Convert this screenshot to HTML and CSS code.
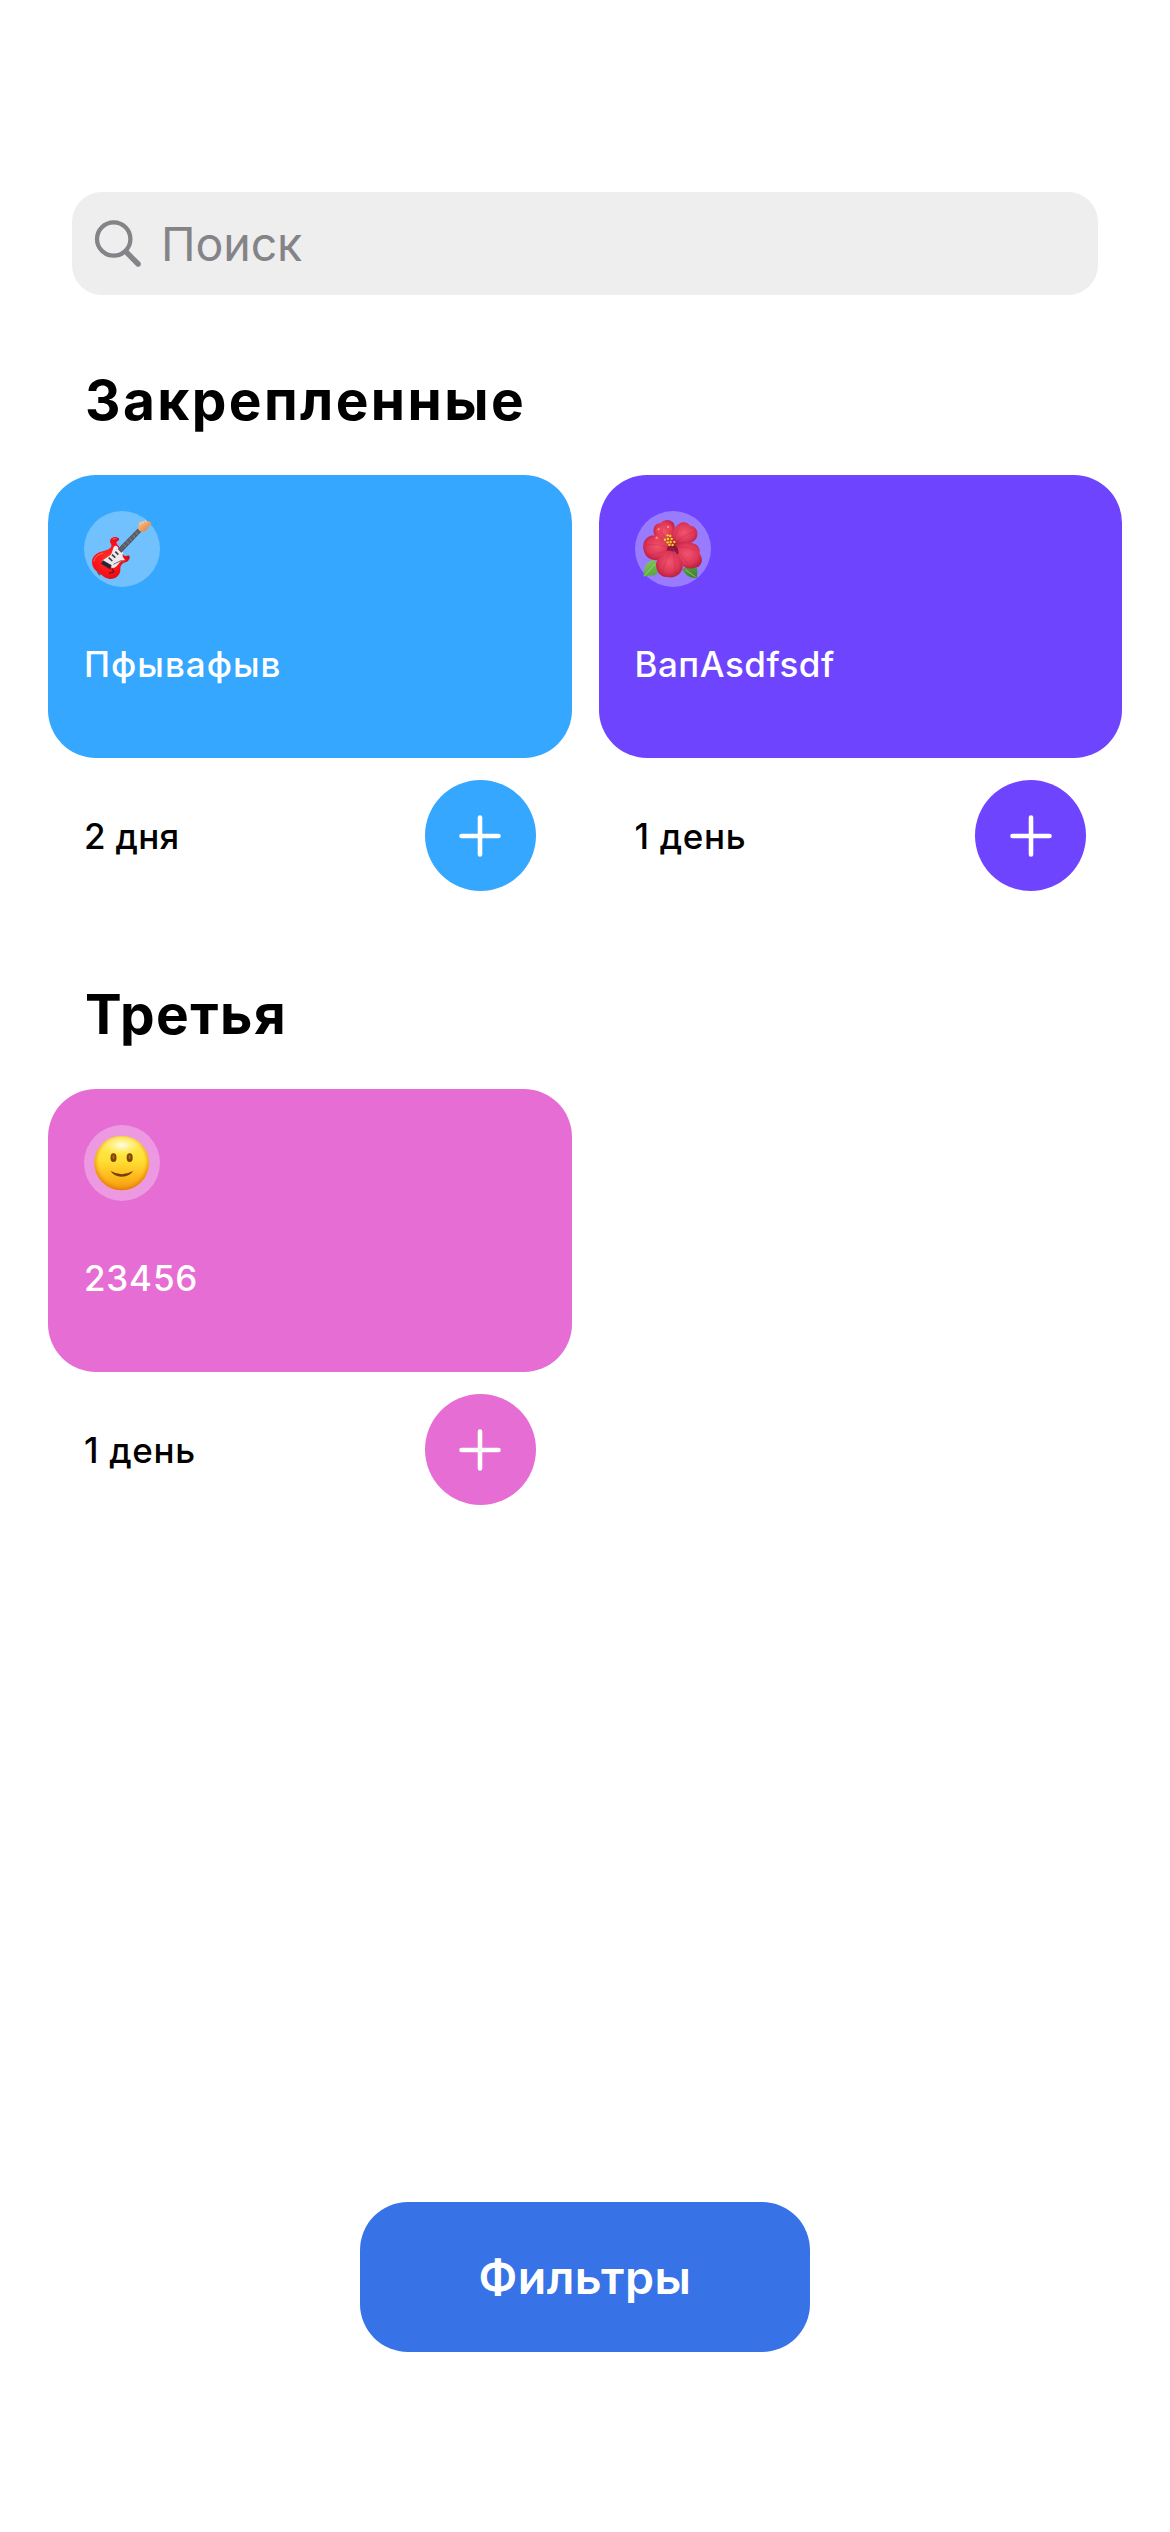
FILE: index.html
```html
<!DOCTYPE html>
<html lang="ru">
<head>
<meta charset="utf-8">
<title>Трекеры</title>
<link rel="stylesheet" href="styles.css">
</head>
<body>
<main class="screen">
  <label class="search">
    <svg class="search-icon" viewBox="0 0 48 48" fill="none" stroke="currentColor" stroke-linecap="round">
      <circle cx="19.7" cy="19" r="16.7" stroke-width="4.3"/>
      <path d="M32.2 32 L44.1 44" stroke-width="5.4"/>
    </svg>
    <span class="search-text">Поиск</span>
  </label>

  <section class="category">
    <h2 class="title title-pinned">Закрепленные</h2>
    <div class="grid">
      <article class="tracker blue">
        <div class="card">
          <div class="emoji">
            <svg viewBox="24 33 228 228">
              <defs>
                <radialGradient id="guitar-body" cx=".4" cy=".5" r=".65">
                  <stop offset="0" stop-color="#ff3028"/><stop offset=".65" stop-color="#f80d16"/><stop offset="1" stop-color="#b80c18"/>
                </radialGradient>
                <linearGradient id="guitar-head" x1="0" y1="0" x2="1" y2="1">
                  <stop offset="0" stop-color="#ffc58d"/><stop offset="1" stop-color="#d97a38"/>
                </linearGradient>
              </defs>
              <path d="M48 186C48 170 60 159 75 155C88 152 102 149 106 139C108 132 99 128 103 119C107 111 118 109 126 113C131 115 131 120 126 122C119 125 121 132 128 138L142 165C148 172 155 165 160 167C164 174 158 184 148 187C138 190 132 198 133 210C132 226 121 236 103 237C88 237 80 227 70 220C57 212 48 200 48 186Z" fill="url(#guitar-body)"/>
              <path d="M65 216l6 8" stroke="#65556a" stroke-width="5" stroke-linecap="round"/>
              <path d="M112 143C116 136 122 136 125 141L142 159C136 168 143 174 148 181C137 179 132 185 127 193C119 204 108 208 102 199L78 184C86 174 102 170 107 160Z" fill="#f0e9ec"/>
              <path d="M125 147L187 84L197 94L136 158Z" fill="#53525b"/>
              <path d="M131 147L190 88M134 152L193 91" stroke="#9299a4" stroke-width="1.3"/>
              <path d="M142 132l8 8M151 123l8 8M160 114l8 8M169 105l8 8M178 96l8 8" stroke="#b3b8bf" stroke-width="1.2"/>
              <path d="M186 86C188 80 186 74 190 70C197 64 209 61 222 65C226 67 227 73 223 76C216 80 217 86 211 91C203 98 193 97 186 86Z" fill="url(#guitar-head)"/>
              <path d="M191 69l4 3M199 65l3 4M208 62l2 4" stroke="#eee3da" stroke-width="3" stroke-linecap="round"/>
              <path d="M118 155l9 9M108 164l10 9M98 173l11 10" stroke="#3d3d48" stroke-width="5"/>
              <path d="M81 181L107 196L102 208L75 191Z" fill="#292832"/>
              <path d="M112 193L137 181L144 189" fill="none" stroke="#706971" stroke-width="3"/>
              <path d="M101 219l12-3M109 208l4 5" stroke="#681e26" stroke-width="4" stroke-linecap="round"/>
              <path d="M54 184C56 170 67 163 80 160M111 117L120 116" fill="none" stroke="#ff8078" stroke-width="3" stroke-linecap="round" opacity=".8"/>
            </svg>
          </div>
          <p class="name name-first">Пфывафыв</p>
        </div>
        <div class="footer">
          <span class="days days-short">2 дня</span>
          <button class="add" aria-label="Добавить"><svg viewBox="0 0 42 42"><path d="M21 2.5V39.5M2.5 21H39.5"/></svg></button>
        </div>
      </article>

      <article class="tracker purple">
        <div class="card">
          <div class="emoji">
            <svg viewBox="27 33 228 228">
              <defs>
                <radialGradient id="petal" cx=".5" cy=".45" r=".62">
                  <stop offset="0" stop-color="#f0546f"/><stop offset=".6" stop-color="#de3657"/><stop offset="1" stop-color="#ae1a3a"/>
                </radialGradient>
                <linearGradient id="leaf" x1="0" y1="0" x2="1" y2="1">
                  <stop offset="0" stop-color="#83cc5b"/><stop offset="1" stop-color="#347e2e"/>
                </linearGradient>
              </defs>
              <path d="M53 230C51 208 59 184 82 180C99 188 104 209 91 223C80 230 67 226 53 230ZM169 207C183 200 205 199 213 205C215 217 214 229 211 235C193 234 177 226 169 207Z" fill="url(#leaf)"/>
              <path d="M56 227L87 192M179 210L209 231" stroke="#b4dc78" stroke-width="2"/>
              <path d="M85 105C78 83 86 70 106 68C115 56 139 58 145 74C149 91 142 123 132 139C112 134 96 122 85 105Z" fill="url(#petal)"/>
              <path d="M133 136C132 105 142 80 164 68C177 64 187 68 192 77C209 78 218 93 213 110C208 128 184 132 160 134Z" fill="url(#petal)"/>
              <path d="M137 141C123 120 101 103 74 107C55 113 48 133 53 151C58 173 76 184 96 179C115 175 124 158 137 141Z" fill="url(#petal)"/>
              <path d="M139 141C155 125 188 122 205 132C218 135 223 149 221 161C235 179 226 201 207 203C190 210 171 203 163 188C151 171 151 155 139 141Z" fill="url(#petal)"/>
              <path d="M135 149C114 151 94 170 90 192C89 214 105 233 124 231C145 237 166 222 170 203C170 181 158 160 135 149Z" fill="url(#petal)"/>
              <path d="M126 138C136 129 152 134 156 148C160 160 156 168 150 158C142 150 130 156 122 150Z" fill="#7d0c2a" opacity=".8"/>
              <path d="M62 136Q94 128 130 145M74 165Q103 159 133 147M156 86Q148 113 140 137M202 96Q170 105 142 137M209 151Q175 136 142 143M184 190Q165 160 141 145M109 215Q116 181 137 150M147 221Q151 185 139 149" fill="none" stroke="#a91d3d" stroke-width="2" opacity=".38"/>
              <path d="M135 136L103 93M133 128L128 86M130 125L93 116" stroke="#d94550" stroke-width="5" stroke-linecap="round"/>
              <g fill="#ed4453"><circle cx="100" cy="91" r="9"/><circle cx="128" cy="84" r="9"/><circle cx="94" cy="116" r="9"/></g>
              <g fill="#ffa29d"><circle cx="98" cy="88" r="3"/><circle cx="126" cy="81" r="3"/><circle cx="92" cy="113" r="3"/></g>
              <path d="M126 108L139 136M119 120L145 126M126 132L137 112" stroke="#a4562a" stroke-width="3"/>
              <g fill="#f7d51f"><circle cx="125" cy="106" r="3.5"/><circle cx="133" cy="108" r="3.5"/><circle cx="117" cy="119" r="3.5"/><circle cx="126" cy="117" r="3.5"/><circle cx="137" cy="117" r="3.5"/><circle cx="145" cy="126" r="3.5"/><circle cx="134" cy="126" r="3.5"/><circle cx="125" cy="127" r="3.5"/><circle cx="130" cy="135" r="3.5"/><circle cx="140" cy="135" r="3.5"/></g>
            </svg>
          </div>
          <p class="name name-latin">ВапAsdfsdf</p>
        </div>
        <div class="footer">
          <span class="days">1 день</span>
          <button class="add" aria-label="Добавить"><svg viewBox="0 0 42 42"><path d="M21 2.5V39.5M2.5 21H39.5"/></svg></button>
        </div>
      </article>
    </div>
  </section>

  <section class="category">
    <h2 class="title">Третья</h2>
    <div class="grid">
      <article class="tracker pink">
        <div class="card">
          <div class="emoji">
            <svg viewBox="24 33 228 228">
              <defs>
                <linearGradient id="face" x1="0" y1="0" x2="0" y2="1">
                  <stop offset="0" stop-color="#ffe85a"/><stop offset=".45" stop-color="#ffe034"/><stop offset=".75" stop-color="#ffb91d"/><stop offset="1" stop-color="#f5970f"/>
                </linearGradient>
                <radialGradient id="face-rim" cx=".5" cy=".47" r=".53">
                  <stop offset=".78" stop-color="#f79a0c" stop-opacity="0"/><stop offset="1" stop-color="#dc7606" stop-opacity=".85"/>
                </radialGradient>
                <radialGradient id="face-shine" cx=".5" cy=".4" r=".5">
                  <stop offset="0" stop-color="#fffff0"/><stop offset="1" stop-color="#fff56c" stop-opacity="0"/>
                </radialGradient>
              </defs>
              <circle cx="137" cy="147" r="82" fill="url(#face)"/>
              <circle cx="137" cy="147" r="82" fill="url(#face-rim)"/>
              <ellipse cx="137" cy="100" rx="63" ry="33" fill="url(#face-shine)"/>
              <g fill="#7b4203"><ellipse cx="112.500" cy="131" rx="9" ry="13"/><ellipse cx="161" cy="131" rx="9" ry="13"/></g>
              <g fill="#a66a16"><ellipse cx="112.500" cy="129" rx="3.500" ry="7"/><ellipse cx="161" cy="129" rx="3.500" ry="7"/></g>
              <path d="M104 171Q137 190 171 171Q163 187 137 188Q112 187 104 171Z" fill="#74400a"/>
            </svg>
          </div>
          <p class="name">23456</p>
        </div>
        <div class="footer">
          <span class="days">1 день</span>
          <button class="add" aria-label="Добавить"><svg viewBox="0 0 42 42"><path d="M21 2.5V39.5M2.5 21H39.5"/></svg></button>
        </div>
      </article>
    </div>
  </section>

  <button class="filters">Фильтры</button>
</main>
</body>
</html>
```
FILE: styles.css
```css
* {
  box-sizing: border-box;
}

body {
  margin: 0;
  background: #fff;
  color: #000;
  font-family: Inter, "Liberation Sans", sans-serif;
}

h2,
p {
  margin: 0;
}

button {
  border: 0;
  padding: 0;
  font-family: inherit;
}

.screen {
  display: flex;
  flex-direction: column;
  width: 1170px;
  height: 2532px;
  padding: 192px 48px 180px;
}

.search {
  display: flex;
  align-items: center;
  gap: 19px;
  height: 103px;
  margin: 0 24px 72px;
  padding-left: 22px;
  border-radius: 30px;
  background: #eee;
  color: #848488;
}

.search-icon {
  width: 48px;
  height: 48px;
}

.search-text {
  font-size: 46.5px;
  line-height: 56px;
  letter-spacing: -0.1px;
}

.category {
  margin-bottom: 90px;
}

.title {
  margin: 0 37px 42px;
  font-size: 55px;
  line-height: 66px;
  font-weight: 700;
  letter-spacing: 1.4px;
}

.title-pinned {
  letter-spacing: 2.4px;
}

.grid {
  display: grid;
  grid-template-columns: 1fr 1fr;
  gap: 27px;
}

.blue {
  --tint: #35a7ff;
}

.purple {
  --tint: #6e44fe;
}

.pink {
  --tint: #e66dd4;
}

.card {
  display: flex;
  flex-direction: column;
  gap: 56px;
  height: 283px;
  padding: 36px;
  border-radius: 48px;
  background: var(--tint);
  color: #fff;
}

.emoji {
  width: 76px;
  height: 76px;
  border-radius: 50%;
  background: rgba(255, 255, 255, 0.3);
}

.emoji svg {
  display: block;
  width: 100%;
  height: 100%;
}

.name,
.days {
  font-size: 35px;
  line-height: 42px;
  font-weight: 500;
  letter-spacing: 0.65px;
}

.name {
  letter-spacing: 0.8px;
}

.name-first {
  letter-spacing: 1px;
}

.name-latin {
  letter-spacing: 0.5px;
}

.days-short {
  letter-spacing: 0.3px;
}

.footer {
  display: flex;
  align-items: center;
  justify-content: space-between;
  margin-top: 22px;
  padding: 0 36px;
}

.days {
  padding-top: 1px;
}

.add {
  display: flex;
  align-items: center;
  justify-content: center;
  width: 111px;
  height: 111px;
  border-radius: 50%;
  background: var(--tint);
}

.add svg {
  width: 42px;
  height: 42px;
  fill: none;
  stroke: #fff;
  stroke-width: 4.6;
  stroke-linecap: round;
}

.filters {
  align-self: center;
  width: 450px;
  height: 150px;
  margin-top: auto;
  border-radius: 48px;
  background: #3772e7;
  color: #fff;
  font-size: 46.5px;
  line-height: 56px;
  font-weight: 600;
  letter-spacing: 0.45px;
}
```
